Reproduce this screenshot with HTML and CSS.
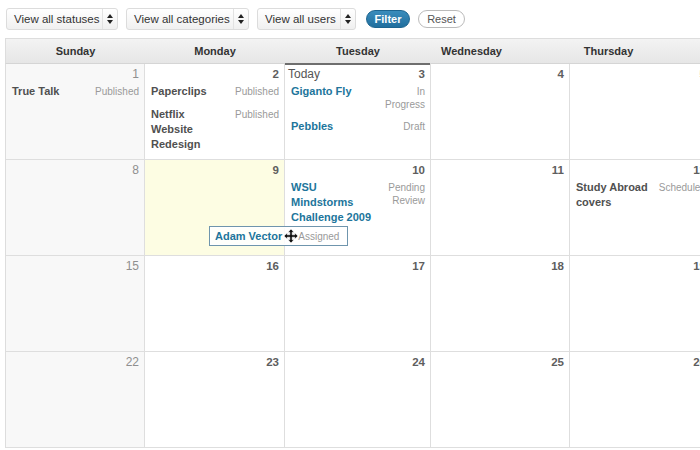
FILE: index.html
```html
<!DOCTYPE html>
<html>
<head>
<meta charset="utf-8">
<link rel="stylesheet" href="styles.css">
</head>
<body>
<div class="toolbar">
  <div class="select s1"><span class="sel-label">View all statuses</span><span class="sel-arrows"><svg width="6" height="10" viewBox="0 0 6 10"><path d="M3 0 L6 4 H0 Z M3 10 L6 6 H0 Z" fill="#222"/></svg></span></div>
  <div class="select s2"><span class="sel-label">View all categories</span><span class="sel-arrows"><svg width="6" height="10" viewBox="0 0 6 10"><path d="M3 0 L6 4 H0 Z M3 10 L6 6 H0 Z" fill="#222"/></svg></span></div>
  <div class="select s3"><span class="sel-label">View all users</span><span class="sel-arrows"><svg width="6" height="10" viewBox="0 0 6 10"><path d="M3 0 L6 4 H0 Z M3 10 L6 6 H0 Z" fill="#222"/></svg></span></div>
  <span class="btn btn-primary">Filter</span>
  <span class="btn btn-reset">Reset</span>
</div>

<div class="calendar">
  <div class="cal-head">
    <div>Sunday</div><div>Monday</div><div>Tuesday</div><div>Wednesday</div><div>Thursday</div>
  </div>
  <div class="cal-body">
    <!-- week 1 -->
    <div class="cell weekend">
      <div class="dayline"><span></span><span class="num">1</span></div>
      <div class="item"><span class="title">True Talk</span><span class="status">Published</span></div>
    </div>
    <div class="cell">
      <div class="dayline"><span></span><span class="num">2</span></div>
      <div class="item"><span class="title">Paperclips</span><span class="status">Published</span></div>
      <div class="item"><span class="title">Netflix Website Redesign</span><span class="status">Published</span></div>
    </div>
    <div class="cell today">
      <div class="dayline"><span class="today-label">Today</span><span class="num">3</span></div>
      <div class="item"><span class="title link">Giganto Fly</span><span class="status">In Progress</span></div>
      <div class="item"><span class="title link">Pebbles</span><span class="status">Draft</span></div>
    </div>
    <div class="cell">
      <div class="dayline"><span></span><span class="num">4</span></div>
    </div>
    <div class="cell">
      <div class="dayline"><span></span><span class="num">5</span></div>
    </div>
    <!-- week 2 -->
    <div class="cell weekend">
      <div class="dayline"><span></span><span class="num">8</span></div>
    </div>
    <div class="cell drop">
      <div class="dayline"><span></span><span class="num">9</span></div>
    </div>
    <div class="cell">
      <div class="dayline"><span></span><span class="num">10</span></div>
      <div class="item"><span class="title link">WSU Mindstorms Challenge 2009</span><span class="status">Pending Review</span></div>
    </div>
    <div class="cell">
      <div class="dayline"><span></span><span class="num">11</span></div>
    </div>
    <div class="cell">
      <div class="dayline"><span></span><span class="num">12</span></div>
      <div class="item"><span class="title">Study Abroad covers</span><span class="status">Scheduled</span></div>
    </div>
    <!-- week 3 -->
    <div class="cell weekend"><div class="dayline"><span></span><span class="num">15</span></div></div>
    <div class="cell"><div class="dayline"><span></span><span class="num">16</span></div></div>
    <div class="cell"><div class="dayline"><span></span><span class="num">17</span></div></div>
    <div class="cell"><div class="dayline"><span></span><span class="num">18</span></div></div>
    <div class="cell"><div class="dayline"><span></span><span class="num">19</span></div></div>
    <!-- week 4 -->
    <div class="cell weekend"><div class="dayline"><span></span><span class="num">22</span></div></div>
    <div class="cell"><div class="dayline"><span></span><span class="num">23</span></div></div>
    <div class="cell"><div class="dayline"><span></span><span class="num">24</span></div></div>
    <div class="cell"><div class="dayline"><span></span><span class="num">25</span></div></div>
    <div class="cell"><div class="dayline"><span></span><span class="num">26</span></div></div>
  </div>

  <div class="dragging">
    <span class="title link">Adam Vector</span>
    <svg class="move" width="14" height="14" viewBox="0 0 14 14"><path d="M7 0 L10 3.2 H8.2 V5.8 H10.8 V4 L14 7 L10.8 10 V8.2 H8.2 V10.8 H10 L7 14 L4 10.8 H5.8 V8.2 H3.2 V10 L0 7 L3.2 4 V5.8 H5.8 V3.2 H4 Z" fill="#111" stroke="#fff" stroke-width="0.6"/></svg>
    <span class="status">Assigned</span>
  </div>
</div>
</body>
</html>
```

FILE: styles.css
```css
html, body {
  margin: 0;
  padding: 0;
  overflow: hidden;
  width: 700px;
  height: 450px;
  background: #fff;
  font-family: "Liberation Sans", Arial, sans-serif;
}

.toolbar {
  display: flex;
  align-items: center;
  gap: 8px;
  padding: 8px 0 0 6px;
  height: 22px;
}

.select {
  display: flex;
  align-items: center;
  height: 20px;
  border: 1px solid #dcdcdc;
  border-radius: 3px;
  background: linear-gradient(#ffffff, #f0f0f0);
  font-size: 11.5px;
  color: #333;
  box-sizing: content-box;
}
.s1 { width: 110px; }
.s2 { width: 121px; }
.s3 { width: 97px; }
.sel-label {
  flex: 1;
  padding-left: 7px;
  white-space: nowrap;
}
.sel-arrows {
  width: 14px;
  height: 20px;
  border-left: 1px solid #e2e2e2;
  display: flex;
  align-items: center;
  justify-content: center;
}

.btn {
  display: inline-flex;
  align-items: center;
  justify-content: center;
  height: 18px;
  border-radius: 10px;
  font-size: 11px;
  box-sizing: border-box;
}
.btn-primary {
  margin-left: 2px;
  width: 44px;
  background: linear-gradient(#3a8cbc, #216f9e);
  color: #fff;
  font-weight: bold;
  border: 1px solid #1d6590;
}
.btn-reset {
  width: 47px;
  border: 1px solid #bbb;
  background: #fff;
  color: #555;
}

.calendar {
  position: relative;
  margin: 8px 0 0 5px;
  width: 710px;
}

.cal-head {
  display: grid;
  grid-template-columns: 139px 140px 146px 81px 193px;
  height: 26px;
  border: 1px solid #ddd;
  border-bottom: 1px solid #d5d5d5;
  background: linear-gradient(#f3f3f3, #e6e6e6);
  box-sizing: border-box;
}
.cal-head div {
  display: flex;
  align-items: center;
  justify-content: center;
  font-size: 11px;
  font-weight: bold;
  color: #333;
}

.cal-body {
  display: grid;
  grid-template-columns: 139px 140px 146px 139px 142px;
  grid-auto-rows: 96px;
  border-left: 1px solid #ddd;
}

.cell {
  border-right: 1px solid #dedede;
  border-bottom: 1px solid #dedede;
  padding: 3px 5px 0 6px;
  box-sizing: border-box;
  background: #fff;
}
.cell.weekend { background: #f8f8f8; }
.cell.drop { background: #fdfde3; }
.cell.today { box-shadow: inset 0 2px 0 #6e6e6e; margin-top: -1px; padding-top: 4px; }

.dayline {
  display: flex;
  justify-content: space-between;
  height: 14px;
  line-height: 14px;
  margin-bottom: 3px;
}
.num {
  font-size: 11.5px;
  font-weight: bold;
  color: #5e5e5e;
}
.weekend .num { color: #8f8f8f; font-weight: normal; font-size: 12px; }
.today-label {
  font-size: 12px;
  color: #555;
  margin-left: -3px;
}

.item {
  display: flex;
  gap: 4px;
  margin-bottom: 8px;
}
.title {
  flex: 1;
  font-size: 11px;
  font-weight: bold;
  line-height: 15px;
  color: #505050;
}
.title.link { color: #21759b; }
.status {
  width: 48px;
  flex: none;
  text-align: right;
  font-size: 10px;
  line-height: 13px;
  padding-top: 1px;
  color: #9a9a9a;
}

.dragging {
  position: absolute;
  left: 204px;
  top: 188px;
  width: 139px;
  height: 20px;
  box-sizing: border-box;
  border: 1px solid #6f95ad;
  box-shadow: inset 0 0 0 1px #fff;
  background: rgba(255,255,255,0.85);
  display: flex;
  align-items: center;
  padding: 0 4px 0 5px;
}
.dragging .title { flex: none; }
.dragging .move { margin-left: 2px; }
.dragging .status { width: auto; padding-top: 0; }
```
